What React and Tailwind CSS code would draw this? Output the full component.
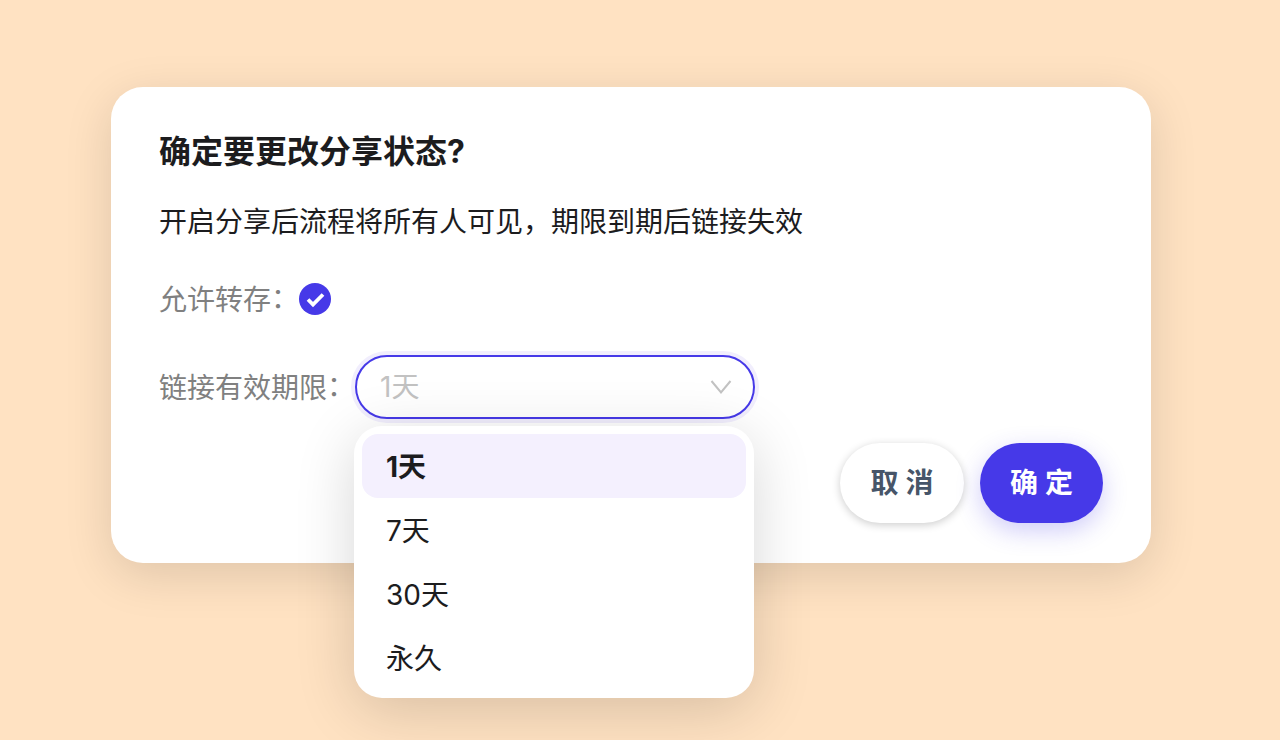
import React from 'react';

const fontStack = "font-['Inter','Noto_Sans_CJK_SC',sans-serif]";

const options = [
  { label: '1天', active: true },
  { label: '7天' },
  { label: '30天' },
  { label: '永久' },
];

// centred half-width colon, the SC face sets it low and to the left
function Colon() {
  return <span className="font-['Noto_Sans_CJK_TC',sans-serif] [font-feature-settings:'halt']">：</span>;
}

export default function App() {
  return (
    <div className={`${fontStack} w-[1280px] h-[740px] overflow-hidden bg-[#ffe2c2] pt-[87px] pl-[111px]`}>
      <div className="w-[1040px] h-[476px] rounded-[32px] bg-white shadow-[0_12px_48px_rgba(0,0,0,0.13)] px-12 pt-[40px] flex flex-col">
        <h1 className="text-[32px] leading-[50px] font-bold text-[#1c1c1e]">确定要更改分享状态?</h1>

        <p className="mt-[20px] text-[28px] leading-[50px] text-[#1c1c1e]">开启分享后流程将所有人可见，期限到期后链接失效</p>

        <div className="mt-[32px] h-[40px] flex items-center">
          <span className="w-[140px] whitespace-nowrap text-[28px] leading-[40px] text-[#808080]">允许转存<Colon /></span>
          <svg width="32" height="32" viewBox="0 0 32 32">
            <circle cx="16" cy="16" r="16" fill="#4639e8" />
            <path d="M9 16.5 L14 21.5 L24 11.5" fill="none" stroke="#fff" strokeWidth="3.8" />
          </svg>
        </div>

        <div className="mt-[36px] flex items-center">
          <span className="w-[196px] whitespace-nowrap text-[28px] leading-[40px] text-[#808080]">链接有效期限<Colon /></span>
          <div className="relative">
            <div className="w-[400px] h-[64px] rounded-full border-2 border-[#4639e8] shadow-[0_0_0_4px_#f1eefd] bg-white flex items-center justify-between pl-[23px] pr-[21px]">
              <span className="text-[28px] text-[#c2c2c2]">1天</span>
              <svg width="22" height="16" viewBox="0 0 22 16">
                <path d="M1.5 2 L11 13.5 L20.5 2" fill="none" stroke="#c2c2c2" strokeWidth="2" />
              </svg>
            </div>
            <div className="absolute left-[-1px] top-[71px] w-[400px] rounded-[28px] bg-white p-2 shadow-[0_12px_60px_rgba(0,0,0,0.16)] z-10">
              {options.map((o) => (
                <div
                  key={o.label}
                  className={`h-[64px] rounded-[16px] pl-6 pt-[2px] flex items-center text-[28px] text-[#1c1c1e] ${o.active ? 'bg-[#f4f0fe] font-bold' : ''}`}
                >
                  {o.label}
                </div>
              ))}
            </div>
          </div>
        </div>

        <div className="mt-[24px] flex justify-end gap-4">
          <button className="w-[124px] h-[80px] rounded-full bg-white text-[28px] font-semibold text-[#475569] shadow-[0_2px_8px_rgba(0,0,0,0.2)]">取 消</button>
          <button className="w-[123px] h-[80px] rounded-full bg-[#4639e8] text-[28px] font-semibold text-white shadow-[0_8px_24px_rgba(68,57,232,0.25)]">确 定</button>
        </div>
      </div>
    </div>
  );
}
